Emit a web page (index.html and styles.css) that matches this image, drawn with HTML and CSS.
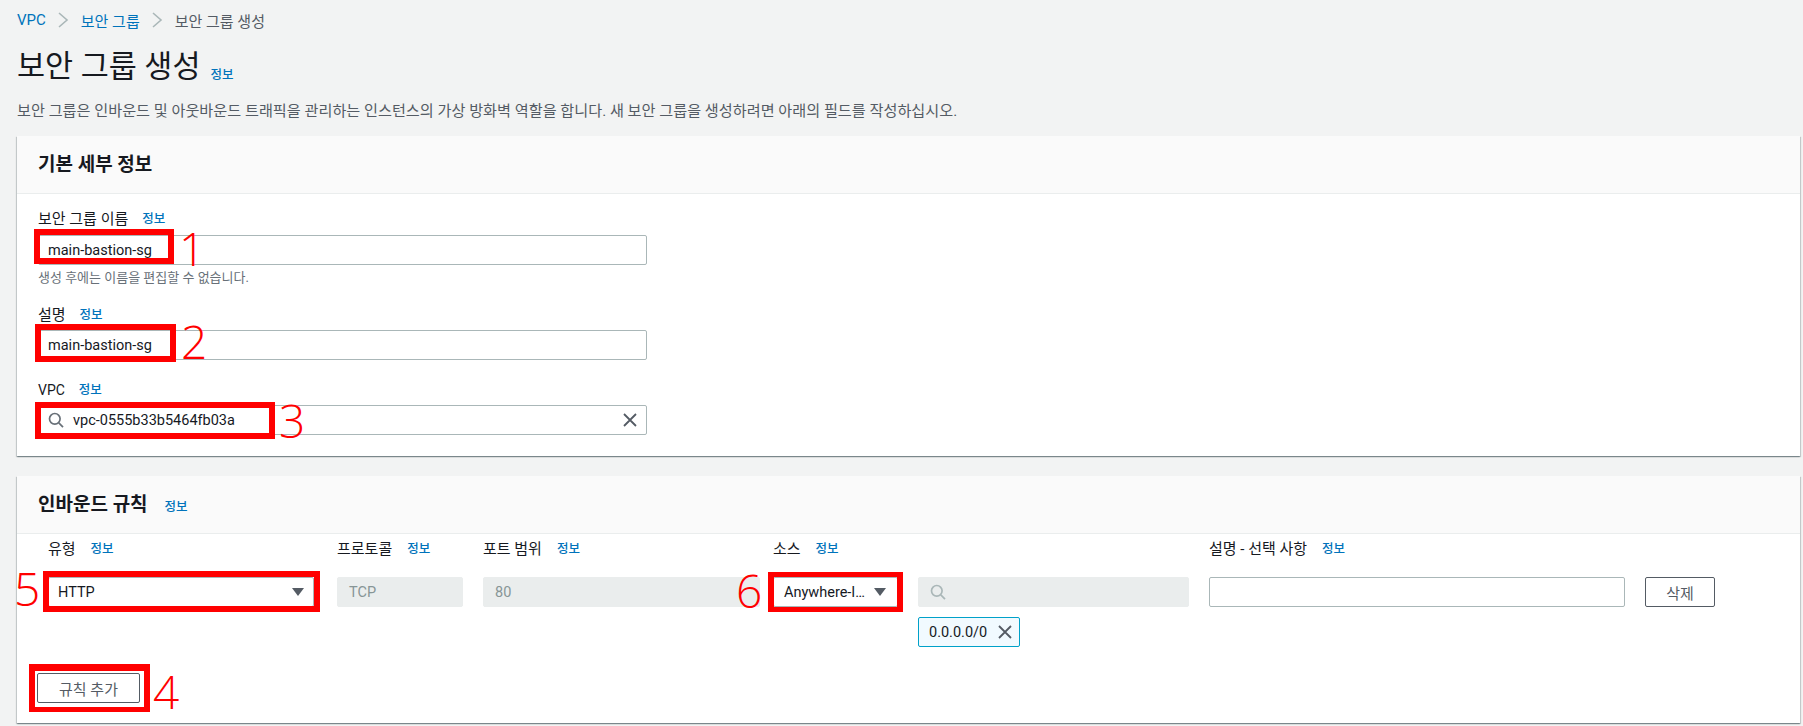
FILE: index.html
```html
<!DOCTYPE html>
<html lang="ko">
<head>
<meta charset="utf-8">
<title>보안 그룹 생성</title>
<link rel="stylesheet" href="styles.css">
</head>
<body>
<div class="page">
  <nav class="crumbs">
    <a class="link">VPC</a>
    <svg class="chev" viewBox="0 0 12 18"><path d="M2 2l8 7-8 7"/></svg>
    <a class="link">보안 그룹</a>
    <svg class="chev" viewBox="0 0 12 18"><path d="M2 2l8 7-8 7"/></svg>
    <span class="crumb-now">보안 그룹 생성</span>
  </nav>
  <div class="title-row">
    <h1 class="title">보안 그룹 생성</h1>
    <a class="info title-info">정보</a>
  </div>
  <p class="desc">보안 그룹은 인바운드 및 아웃바운드 트래픽을 관리하는 인스턴스의 가상 방화벽 역할을 합니다. 새 보안 그룹을 생성하려면 아래의 필드를 작성하십시오.</p>

  <section class="card">
    <header class="card-head"><h2 class="card-title">기본 세부 정보</h2></header>
    <div class="basic-body">
      <div class="field field-name">
        <div class="label"><span>보안 그룹 이름</span><a class="info">정보</a></div>
        <div class="input">main-bastion-sg</div>
        <div class="hint">생성 후에는 이름을 편집할 수 없습니다.</div>
      </div>
      <div class="field field-desc">
        <div class="label"><span>설명</span><a class="info">정보</a></div>
        <div class="input">main-bastion-sg</div>
      </div>
      <div class="field field-vpc">
        <div class="label"><span class="latin">VPC</span><a class="info">정보</a></div>
        <div class="input input-search">
          <svg class="search" viewBox="0 0 16 16"><circle cx="6.8" cy="6.8" r="5.3"/><path d="M10.8 10.8l4.2 4.4"/></svg>
          <span class="grow">vpc-0555b33b5464fb03a</span>
          <svg class="cross" viewBox="0 0 14 14"><path d="M1 1l12 12M13 1L1 13"/></svg>
        </div>
      </div>
    </div>
  </section>

  <section class="card card-rules">
    <header class="card-head">
      <h2 class="card-title">인바운드 규칙</h2><a class="info head-info">정보</a>
    </header>
    <div class="rules-body">
      <div class="rules-grid">
        <div class="label"><span>유형</span><a class="info">정보</a></div>
        <div class="label"><span>프로토콜</span><a class="info">정보</a></div>
        <div class="label"><span>포트 범위</span><a class="info">정보</a></div>
        <div class="label"><span>소스</span><a class="info">정보</a></div>
        <div></div>
        <div class="label"><span>설명 - 선택 사항</span><a class="info">정보</a></div>
        <div></div>

        <div class="input select-type">HTTP<i class="caret"></i></div>
        <div class="input disabled">TCP</div>
        <div class="input disabled input-port">80</div>
        <div class="input select-source"><span class="grow">Anywhere-I…</span><i class="caret"></i></div>
        <div class="search-col">
          <div class="input disabled">
            <svg class="search search-off" viewBox="0 0 16 16"><circle cx="6.8" cy="6.8" r="5.3"/><path d="M10.8 10.8l4.2 4.4"/></svg>
          </div>
          <div class="token">0.0.0.0/0<svg class="cross" viewBox="0 0 14 14"><path d="M1 1l12 12M13 1L1 13"/></svg></div>
        </div>
        <div class="input"></div>
        <button class="btn btn-del">삭제</button>
      </div>
      <button class="btn btn-add">규칙 추가</button>
    </div>
  </section>

  <div class="mark mark-1"></div>
  <div class="mark mark-2"></div>
  <div class="mark mark-3"></div>
  <div class="mark mark-4"></div>
  <div class="mark mark-5"></div>
  <div class="mark mark-6"></div>
  <span class="num num-1">1</span>
  <span class="num num-2">2</span>
  <span class="num num-3">3</span>
  <span class="num num-4">4</span>
  <span class="num num-5">5</span>
  <span class="num num-6">6</span>
</div>
</body>
</html>
```
FILE: styles.css
```css
* { box-sizing: border-box; }
html, body { margin: 0; padding: 0; }
body {
  background: #f2f3f3;
  color: #16191f;
  font-family: Roboto, "Noto Sans CJK KR", sans-serif;
  font-size: 15px;
  overflow: hidden;
}
.page { position: relative; width: 1803px; height: 726px; padding: 0 3px 0 17px; }

.crumbs { height: 40px; display: flex; align-items: center; }
.link { color: #0073bb; }
.chev { width: 12px; height: 18px; margin: 0 12px 0 11px; fill: none; stroke: #aab7b8; stroke-width: 1.6; }
.crumb-now { color: #545b64; }

.title-row { height: 40px; margin-top: 7px; display: flex; align-items: center; }
.title { margin: 0; font-size: 30.5px; font-weight: 400; line-height: 40px; }
.info { color: #0073bb; font-size: 12.5px; font-weight: 500; }
.title-info { margin: 12px 0 0 10px; }
.desc { margin: 13px 0 14px; height: 22px; line-height: 22px; color: #545b64; font-size: 15.17px; }

.card {
  background: #fff;
  box-shadow: 0 1px 1px 0 rgba(0,28,36,.3), 1px 1px 1px 0 rgba(0,28,36,.15), -1px 1px 1px 0 rgba(0,28,36,.15);
}
.card-rules { margin-top: 20px; }
.card-head {
  height: 58px;
  background: #fafafa;
  border-bottom: 1px solid #eaeded;
  padding: 0 0 5px 21px;
  display: flex;
  align-items: center;
}
.card-title { margin: 0; font-size: 19px; font-weight: 700; }
.head-info { margin: 6px 0 0 17px; }

.basic-body { height: 262px; padding: 15px 21px 0; }
.field-desc { margin-top: 19px; }
.field-vpc { margin-top: 20px; }
.label { height: 20px; line-height: 20px; display: flex; gap: 14px; align-items: center; white-space: nowrap; }
.latin { font-size: 14px; }
.field .label { margin-bottom: 5px; }
.field-name .label { margin-bottom: 6px; }
.field .input { width: 609px; }
.hint { margin-top: 5px; height: 16px; line-height: 16px; font-size: 13px; color: #687078; }

.input {
  height: 30px;
  border: 1px solid #aab7b8;
  border-radius: 2px;
  background: #fff;
  padding: 0 9px;
  display: flex;
  align-items: center;
  white-space: nowrap;
  font-size: 14.5px;
}
.input-search { gap: 9px; }
.grow { flex: 1; min-width: 0; }
.search { width: 16px; height: 16px; fill: none; stroke: #687078; stroke-width: 1.7; flex: none; }
.search-off { stroke: #aab7b8; }
.cross { width: 14px; height: 14px; fill: none; stroke: #545b64; stroke-width: 1.8; flex: none; }
.disabled { background: #eaeded; border-color: #eaeded; color: #879596; padding-left: 11px; }

.rules-body { height: 189px; padding: 5px 0 0 31px; }
.rules-grid {
  display: grid;
  grid-template-columns: 269px 126px 270px 125px 271px 416px 70px;
  column-gap: 20px;
  row-gap: 18px;
  align-items: start;
}
.rules-grid .label { gap: 15px; }
.input-port { width: 277px; }
.select-type, .select-source { justify-content: space-between; }
.select-type { width: 266px; }
.select-source { padding: 0 11px 0 10px; }
.caret {
  width: 0; height: 0; flex: none;
  border-left: 6px solid transparent;
  border-right: 6px solid transparent;
  border-top: 8px solid #545b64;
}
.search-col { display: flex; flex-direction: column; align-items: flex-start; gap: 10px; }
.search-col .input { width: 100%; }
.token {
  height: 30px; width: 102px;
  border: 1px solid #00a1c9;
  border-radius: 2px;
  background: #f1faff;
  padding: 0 7px 0 10px;
  display: flex;
  align-items: center;
  justify-content: space-between;
  font-size: 14.5px;
}
.btn {
  height: 30px;
  border: 1px solid #545b64;
  border-radius: 2px;
  background: #fff;
  color: #545b64;
  font: inherit;
  padding: 0;
}
.btn-del { width: 70px; }
.btn-add { display: block; width: 103px; margin: 26px 0 0 -11px; }

.mark { position: absolute; border: 6px solid #f00; }
.mark-1 { left: 34px; top: 229px; width: 140px; height: 35px; }
.mark-2 { left: 35px; top: 324px; width: 141px; height: 38px; }
.mark-3 { left: 35px; top: 402px; width: 240px; height: 37px; }
.mark-4 { left: 29px; top: 664px; width: 121px; height: 48px; border-width: 7px 6px 5px; }
.mark-5 { left: 43px; top: 571px; width: 277px; height: 41px; }
.mark-6 { left: 768px; top: 572px; width: 135px; height: 40px; border-width: 5px 6px; }

.num {
  position: absolute;
  color: #f00;
  font-family: "Open Sans", sans-serif;
  font-weight: 300;
  font-size: 46px;
  line-height: 32px;
}
.num-1 { left: 179px; top: 232px; }
.num-2 { left: 181px; top: 325px; }
.num-3 { left: 279px; top: 404px; }
.num-4 { left: 153px; top: 675px; }
.num-5 { left: 14px; top: 572px; }
.num-6 { left: 736px; top: 574px; }
```
